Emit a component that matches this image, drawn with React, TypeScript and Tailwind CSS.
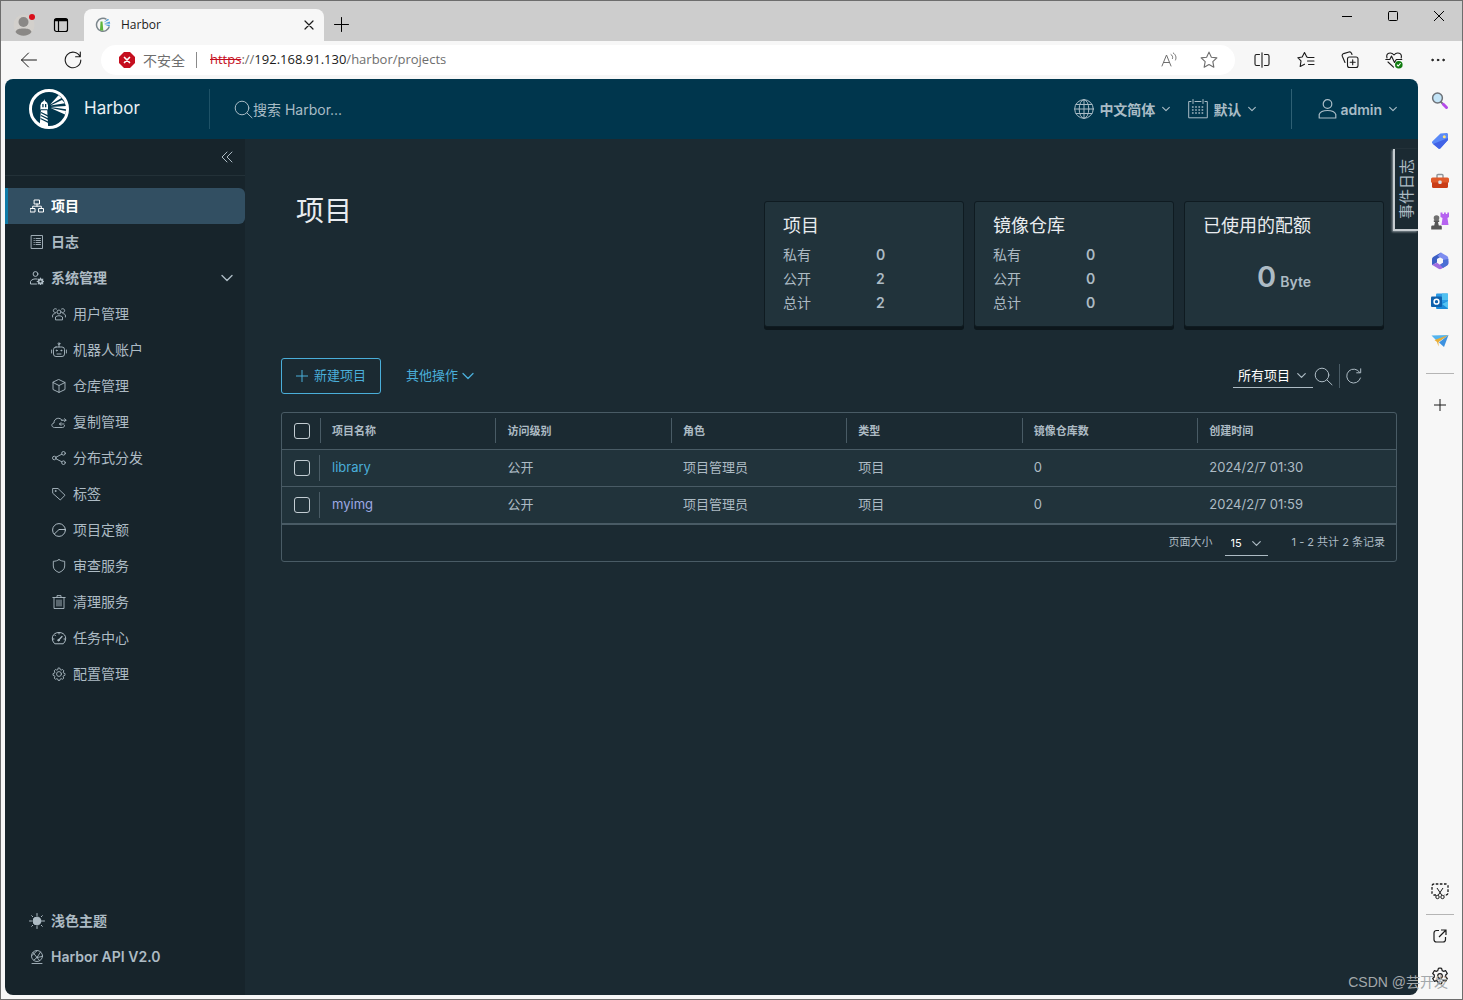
import React from "react";

type IconProps = { className?: string; children: React.ReactNode; box?: number; sw?: number };

function Icon({ className = "size-4", children, box = 16, sw = 1 }: IconProps) {
  return (
    <svg
      className={`shrink-0 ${className}`}
      viewBox={`0 0 ${box} ${box}`}
      fill="none"
      stroke="currentColor"
      strokeWidth={sw}
      strokeLinecap="round"
      strokeLinejoin="round"
      aria-hidden="true"
    >
      {children}
    </svg>
  );
}

const GEAR =
  "M8 1.2l1.1.2.4 1.7 1 .5 1.6-.8 1.5 1.6-.8 1.5.5 1.1 1.6.5v1.1l-.1.9-1.6.5-.5 1.1.8 1.5-1.5 1.5-1.5-.8-1.1.5-.5 1.6H7.1l-.5-1.6-1.1-.5-1.5.8-1.5-1.5.8-1.5-.5-1.1-1.6-.5v-2l1.6-.5.5-1.1-.8-1.5 1.5-1.6 1.5.8 1.1-.5.4-1.7z";

function Chevron({ className = "size-2", sw = 1 }: { className?: string; sw?: number }) {
  return (
    <Icon className={className} box={12} sw={sw}>
      <path d="M1 3.5l5 5 5-5" />
    </Icon>
  );
}

function SearchIcon() {
  return (
    <Icon className="size-[19px]" box={19}>
      <circle cx="8" cy="8" r="6.8" />
      <path d="M13 13l5 4.8" />
    </Icon>
  );
}

function HarborLogo() {
  return (
    <svg className="size-10 shrink-0" viewBox="0 0 40 40" aria-hidden="true">
      <circle cx="20" cy="20" r="18.5" fill="none" stroke="#fff" strokeWidth="3" />
      <path
        fill="#fff"
        d="M15.300 10l.5 1.800 2.600 2.200v1.500h.6v5h-.8l.8 15 .2 2.500-8.500-1.500 1.300-16h-.6v-5h.6V14l2.800-2.200z"
      />
      <path fill="#00364d" d="M13.300 15h1.300v3.300h-1.300zM16 15h1.300v3.300H16zM12 20.300h6.500v.9H12z" />
      <path stroke="#00364d" strokeWidth="1.200" d="M12 23.500l7.300 3.600M12 26.500l7.300 3.600M11.500 29.500l8 3.900" />
      <path
        fill="#fff"
        d="M21 15.700l8.500-9.500 3 2.800zM21.500 16.500l11.500-5.500 3 3.300zM21.500 18l15.500-1v3.200zM21.500 19l15.500 3-1 3.600z"
      />
    </svg>
  );
}

function Favicon() {
  return (
    <svg className="size-4 shrink-0" viewBox="0 0 16 16" aria-hidden="true">
      <path d="M11.500 2.300A6.500 6.500 0 1 0 14.300 9.500" fill="none" stroke="#7b868c" strokeWidth="1.500" />
      <path d="M5.500 4.500h2l.8 9.300-3.300-.6z" fill="#5eb53c" />
      <path d="M8.500 5.500l4.500-3.800 1 1.200zM9 6.500l5.800-2 .4 2.300zM9 7.500l6 .3-.5 1.800z" fill="#4a9bd4" />
    </svg>
  );
}

const icons = {
  projects: (
    <Icon className="size-[14px]" box={14}>
      <path d="M4.500 1h5v4h-5zM.5 9.500H5v3.500H.5zM9 9.500h4.500V13H9zM7 5v2.200M2.700 9.500V7.200h8.600v2.300" />
    </Icon>
  ),
  logs: (
    <Icon className="size-[14px]" box={14} sw={0.9}>
      <path d="M1.500.5h11v13h-11zM4 3.500h.3M4 5.500h.3M4 7.500h.3M4 9.500h.3M6 3.500h4.500M6 5.500h4.500M6 7.500h4.500M6 9.500h4.500" />
    </Icon>
  ),
  admin: (
    <Icon className="size-[14px]" box={14}>
      <circle cx="5.500" cy="3" r="2.400" />
      <path d="M6.500 13H.5v-2.500C1.500 8.500 4 7.500 7 8" />
      <circle cx="10.500" cy="10.500" r="2" strokeWidth="1.800" />
      <path d="M10.500 7.200v1M10.500 12.800v1M7.200 10.500h1M12.800 10.500h1M8.200 8.200l.7.7M12.100 12.100l.7.7M12.800 8.200l-.7.7M8.900 12.100l-.7.7" strokeWidth="1.200" />
    </Icon>
  ),
  users: (
    <Icon className="size-[14px]" box={14} sw={0.9}>
      <circle cx="7" cy="5" r="2" />
      <path d="M3.500 12.500V10C5 8.300 9 8.300 10.500 10v2.500zM4 5.500A2 2 0 1 1 4.500 2M10 5.500A2 2 0 1 0 9.500 2M.6 10V8c.5-.9 1.300-1.300 2.500-1.400M13.400 10V8c-.5-.9-1.300-1.300-2.500-1.400" />
    </Icon>
  ),
  robot: (
    <Icon className="size-4" box={16} sw={0.9}>
      <rect x="2.500" y="5" width="11" height="9.500" rx="2.500" />
      <path d="M8 5V2.500M.6 8v3M15.400 8v3M6 12h4" />
      <circle cx="8" cy="1.700" r=".9" />
      <circle cx="5.700" cy="8.500" r=".5" />
      <circle cx="10.300" cy="8.500" r=".5" />
    </Icon>
  ),
  box: (
    <Icon className="size-[14px]" box={14} sw={0.9}>
      <path d="M7 .6l6 2.900v7L7 13.400 1 10.500v-7zM1 3.500l6 3 6-3M7 6.500v6.900" />
    </Icon>
  ),
  cloud: (
    <Icon className="size-4" box={16} sw={0.9}>
      <path d="M13.500 11.500c0 1.200-.8 2-2 2H3.500C.2 13.300-.1 9.500 3 9c-.3-5 6.300-6.500 8.200-2.500M10.500 6.200h4.500M13.500 4.700L15 6.200l-1.500 1.500M13 10H8.500M10 8.500L8.500 10l1.500 1.500" />
    </Icon>
  ),
  share: (
    <Icon className="size-[14px]" box={14} sw={0.9}>
      <circle cx="2.300" cy="7" r="1.800" />
      <circle cx="11.500" cy="2.300" r="1.800" />
      <circle cx="11.500" cy="11.700" r="1.800" />
      <path d="M4 6.200l5.800-3M4 7.800l5.800 3" />
    </Icon>
  ),
  tag: (
    <Icon className="size-[14px]" box={14} sw={0.9}>
      <path d="M1 1.500h5l7 6.700-4.700 4.800L1 6.500z" />
      <circle cx="3.500" cy="4" r=".5" />
    </Icon>
  ),
  quota: (
    <Icon className="size-[14px]" box={14}>
      <circle cx="7" cy="7" r="6.400" />
      <path d="M13.300 6.500H7L2.300 11" />
    </Icon>
  ),
  shield: (
    <Icon className="size-[14px]" box={14} sw={0.9}>
      <path d="M7 .6c1.500 1 3.500 1.700 5.700 1.700V7c0 3.500-3 5.500-5.700 6.500C4.300 12.500 1.300 10.500 1.300 7V2.300C3.500 2.300 5.500 1.600 7 .6z" />
    </Icon>
  ),
  trash: (
    <Icon className="size-[14px]" box={14} sw={0.9}>
      <path d="M.8 2.500h12.400M5 2.300V.6h4v1.700M2 2.500v11h10v-11M5 5v6M7 5v6M9 5v6" />
    </Icon>
  ),
  gauge: (
    <Icon className="size-4" box={16}>
      <path d="M3.500 13.500C-1 9 1.500 2.500 8 2.500s9 6.500 4.500 11zM8 2.500v1.500M1.500 9h1.500M13 9h1.500M3.700 5l.8.8" />
      <path d="M7.500 10.200L11 6.500" strokeWidth="1.300" />
      <circle cx="7.500" cy="10.200" r=".8" fill="currentColor" />
    </Icon>
  ),
  gear: (
    <Icon className="size-[14px]" box={16}>
      <path d={GEAR} />
      <circle cx="8" cy="8" r="2.800" />
    </Icon>
  ),
  sun: (
    <Icon className="size-4" box={16}>
      <circle cx="8" cy="8" r="4" fill="currentColor" />
      <path d="M8 .5v2M8 13.500v2M.5 8h2M13.500 8h2M2.700 2.700l1 1M12.300 12.300l1 1M13.300 2.700l-1 1M2.700 13.300l1-1" />
    </Icon>
  ),
  api: (
    <Icon className="size-[14px]" box={14} sw={0.9}>
      <circle cx="7" cy="6" r="5.500" />
      <path d="M2 13.500h10M3 2.500l4 5 5-1M7 7.500L4 10M7 7.500L10.500 2M2 5.500L7 .8M9.500 10.500L7 7.500" />
    </Icon>
  ),
};

const subItems: [keyof typeof icons, string][] = [
  ["users", "用户管理"],
  ["robot", "机器人账户"],
  ["box", "仓库管理"],
  ["cloud", "复制管理"],
  ["share", "分布式分发"],
  ["tag", "标签"],
  ["quota", "项目定额"],
  ["shield", "审查服务"],
  ["trash", "清理服务"],
  ["gauge", "任务中心"],
  ["gear", "配置管理"],
];

function NavIcon({ name }: { name: keyof typeof icons }) {
  return <span className="flex w-4 shrink-0 justify-center">{icons[name]}</span>;
}

function TitleBar() {
  return (
    <div className="flex h-10 bg-[#cdcdcd]">
      <div className="flex w-[83px] items-center gap-4 pt-2 pl-2.5">
        <button aria-label="Profile" className="relative size-[26px]">
          <svg viewBox="0 0 26 26" className="size-[26px]" aria-hidden="true">
            <circle cx="13" cy="13" r="10.500" fill="#d3d0cc" />
            <circle cx="12.500" cy="10" r="5" fill="#8a8886" />
            <path d="M4.500 20c1-3 3.500-3.500 8-3.500s7 .5 8 3.500c-3.500 5-12.500 5-16 0z" fill="#8a8886" />
            <circle cx="21" cy="5" r="3" fill="#d90f1c" />
          </svg>
        </button>
        <button aria-label="Tab actions">
          <Icon className="size-4" sw={1.2}>
            <rect x="1.500" y="1.500" width="13" height="13" rx="2" />
            <path d="M2.500 3h11" strokeWidth="2.600" />
            <path d="M5.500 4v10" />
          </Icon>
        </button>
      </div>
      <div className="mt-2 flex w-60 items-center rounded-t-lg bg-[#f7f7f7] pr-2 pl-[11px] text-[12px] text-[#1b1b1b]">
        <Favicon />
        <span className="ml-2.5 flex-1">Harbor</span>
        <button aria-label="Close tab" className="p-[2px]">
          <Icon className="size-2.5" box={10} sw={1.2}>
            <path d="M1 1l8 8M9 1l-8 8" />
          </Icon>
        </button>
      </div>
      <button aria-label="New tab" className="ml-2.5 pt-[7px]">
        <Icon className="size-[15px]" box={15}>
          <path d="M7.500.5v14M.5 7.500h14" />
        </Icon>
      </button>
      <div className="ml-auto flex h-[30px]">
        <button aria-label="Minimize" className="flex w-[46px] items-center justify-center">
          <Icon className="size-2.5" box={10}><path d="M0 5.500h10" /></Icon>
        </button>
        <button aria-label="Maximize" className="flex w-[46px] items-center justify-center">
          <Icon className="size-2.5" box={10}><rect x=".5" y=".5" width="9" height="9" rx="1" /></Icon>
        </button>
        <button aria-label="Close" className="flex w-[46px] items-center justify-center">
          <Icon className="size-2.5" box={10}><path d="M.3.3l9.400 9.400M9.700.3L.3 9.700" /></Icon>
        </button>
      </div>
    </div>
  );
}

const STAR = "M8 1l2.100 4.500 4.900.6-3.600 3.400.9 4.900L8 12l-4.300 2.400.9-4.900L1 6.100l4.900-.6z";

function ToolButton({ label, children }: { label: string; children: React.ReactNode }) {
  return (
    <button aria-label={label} className="flex w-11 shrink-0 items-center justify-center">
      {children}
    </button>
  );
}

function Toolbar() {
  return (
    <div className="flex h-[38px] bg-[#f7f7f7] pl-1.5 text-[#1b1b1b]">
      <ToolButton label="Back">
        <Icon className="size-4"><path d="M.5 8h15M7.500 1L.5 8l7 7" /></Icon>
      </ToolButton>
      <ToolButton label="Refresh">
        <Icon className="size-[18px]" box={18} sw={1.100}>
          <path d="M16 5.500A7.800 7.800 0 1 0 16.800 9M16.300 1v4.700h-4.700" />
        </Icon>
      </ToolButton>
      <div className="my-1 mr-[5px] ml-1.5 flex flex-1 items-center rounded-full bg-white pl-[18px] text-[14px] text-[#6e6e6e]">
        <svg viewBox="0 0 16 16" className="size-4 shrink-0" aria-hidden="true">
          <path d="M5 0h6l5 5v6l-5 5H5l-5-5V5z" fill="#c50f1f" />
          <path d="M5.500 5.500l5 5M10.500 5.500l-5 5" stroke="#fff" strokeWidth="1.700" strokeLinecap="round" />
        </svg>
        <span className="ml-2">不安全</span>
        <span className="mr-[13px] ml-[11px] h-4 w-px bg-[#8a8a8a]" />
        <div className="flex-1 text-[13px]">
          <span className="text-[#c50f1f] line-through">https</span>://
          <span className="text-[#1b1b1b]">192.168.91.130</span>/harbor/projects
        </div>
        <button aria-label="Read aloud" className="flex w-10 justify-center">
          <Icon className="size-4">
            <path d="M1 14L5.500 3 10 14M2.600 10.500h5.800M10 2.500c1.500.9 2 2.500 1.500 4M12.300 1c2.600 1.800 3.300 4.500 2.200 7" />
          </Icon>
        </button>
        <button aria-label="Favorite" className="mr-[6px] flex w-10 justify-center">
          <Icon className="size-[18px]"><path d={STAR} /></Icon>
        </button>
      </div>
      <ToolButton label="Split screen">
        <Icon className="size-4" sw={1.100}>
          <path d="M5.500 2.500h-3a1.500 1.500 0 0 0-1.500 1.500v8a1.500 1.500 0 0 0 1.500 1.500h3M10.500 2.500h3A1.500 1.500 0 0 1 15 4v8a1.500 1.500 0 0 1-1.500 1.500h-3M8 .7v14.600" />
        </Icon>
      </ToolButton>
      <ToolButton label="Favorites">
        <Icon className="size-[18px]" box={18} sw={1.100}>
          <path d="M11 6.500L9.800 6 7.500 1.500 5.200 6 .8 6.700l3.200 3.200-.8 5.600 4.300-2.300M11 6.500h6M10.500 10H17M11.500 13.500H17" />
        </Icon>
      </ToolButton>
      <ToolButton label="Collections">
        <Icon className="size-[18px]" box={18} sw={1.100}>
          <rect x="6.500" y="6" width="10.500" height="10.500" rx="2" />
          <path d="M11.700 8.700v5M9.200 11.200h5M4 11.500L1.300 5.200C.9 4 1.500 3 2.600 2.600L8 1c1.200-.3 2 .2 2.500 1.200L11 3.500" />
        </Icon>
      </ToolButton>
      <ToolButton label="Browser essentials">
        <Icon className="size-[18px]" box={18} sw={1.100}>
          <path d="M2 7C.5 2 6 .5 9 4c3-3.500 8.500-2 7.200 3M.8 8.500h4L6.500 5l3 6.500 1.800-3h5.500M3 11l5.500 5.200" />
          <circle cx="13.800" cy="13.800" r="3.800" fill="#107c10" stroke="none" />
          <path d="M12.300 14l1 1 2-2.500" stroke="#fff" />
        </Icon>
      </ToolButton>
      <ToolButton label="More">
        <Icon className="size-4">
          <circle cx="2.500" cy="8" r=".8" fill="currentColor" />
          <circle cx="8" cy="8" r=".8" fill="currentColor" />
          <circle cx="13.500" cy="8" r=".8" fill="currentColor" />
        </Icon>
      </ToolButton>
      <span className="w-0.5" />
    </div>
  );
}

function AppHeader() {
  return (
    <header className="flex h-[60px] items-center bg-[#00364d] pr-[21px] pl-6 text-[#a9bcc6]">
      <a href="#home" className="flex w-[180px] items-center gap-[15px] text-[17px] text-[#e9f0f3]">
        <HarborLogo />
        Harbor
      </a>
      <span className="h-10 w-px bg-[#1e5267]" />
      <label className="ml-6 flex flex-1 items-center">
        <SearchIcon />
        <input
          type="search"
          aria-label="搜索"
          placeholder="搜索 Harbor..."
          className="w-full bg-transparent text-[14px] outline-none placeholder:text-[#a9bcc6]"
        />
      </label>
      <button className="flex items-center text-[14px] font-semibold">
        <Icon className="mr-[5px] size-5" box={20}>
          <circle cx="10" cy="10" r="9.300" />
          <ellipse cx="10" cy="10" rx="4.800" ry="9.300" />
          <path d="M10 .7v18.600M.7 10h18.600M2 5.500h16M2 14.500h16" />
        </Icon>
        中文简体
        <Chevron className="ml-[7px] size-2" sw={1.7} />
      </button>
      <button className="ml-[18px] flex items-center text-[14px] font-semibold">
        <Icon className="mr-[5px] size-5" box={20}>
          <path d="M3 2.500H.7v16.300h18.600V2.500H17M7 2.500h6M5 .5v4M15 .5v4" />
          <path d="M4.500 8h12M4.500 11h12M4.500 14h12" strokeDasharray=".6 2.600" strokeWidth="1.400" />
        </Icon>
        默认
        <Chevron className="ml-[7px] size-2" sw={1.7} />
      </button>
      <span className="mr-[26px] ml-[35px] h-10 w-px bg-[#2e6074]" />
      <button className="flex items-center text-[14px] font-semibold">
        <Icon className="mr-0.5 size-5" box={20} sw={1.200}>
          <circle cx="9.500" cy="5" r="4.300" />
          <path d="M1.200 19v-3.500c1-3 4-4 8.300-4s7.300 1 8.300 4V19z" />
        </Icon>
        admin
        <Chevron className="ml-[7px] size-2" sw={1.7} />
      </button>
    </header>
  );
}

function SideNav() {
  return (
    <nav className="flex w-60 shrink-0 flex-col bg-[#17242b] text-[14px] text-[#adbbc4]">
      <div className="flex h-[37px] items-center justify-end border-b border-[#233138] pr-3">
        <button aria-label="收起">
          <Icon className="size-3" box={12}><path d="M6 1L1 6l5 5M11 1L6 6l5 5" /></Icon>
        </button>
      </div>
      <div className="mt-3 flex flex-col">
        <a href="#projects" className="flex h-9 items-center gap-[6px] rounded-r-md border-l-3 border-[#0f7aa6] bg-[#324f62] pb-px pl-[21px] font-semibold text-white">
          <NavIcon name="projects" />
          项目
        </a>
        <a href="#logs" className="flex h-9 items-center gap-[6px] pb-px pl-6 font-semibold">
          <NavIcon name="logs" />
          日志
        </a>
        <button className="flex h-9 items-center gap-[6px] pr-3 pb-px pl-6 text-left font-semibold">
          <NavIcon name="admin" />
          <span className="flex-1">系统管理</span>
          <Chevron className="size-3" sw={1.4} />
        </button>
        {subItems.map(([icon, label]) => (
          <a key={label} href={`#${icon}`} className="flex h-9 items-center gap-[6px] pb-px pl-[46px]">
            <NavIcon name={icon} />
            {label}
          </a>
        ))}
      </div>
      <div className="mt-auto flex flex-col pb-5 font-semibold">
        <button className="flex h-9 items-center gap-[6px] pb-px pl-6">
          <NavIcon name="sun" />
          浅色主题
        </button>
        <a href="#api" className="flex h-9 items-center gap-[6px] pb-px pl-6">
          <NavIcon name="api" />
          Harbor API V2.0
        </a>
      </div>
    </nav>
  );
}

const CARD = "h-[126px] w-[200px] rounded-[3px] border border-[#0f1b21] bg-[#21333b] px-[18px] pt-3 shadow-[0_3px_0_0_#0c161b]";

function StatCard({ title, values }: { title: string; values: number[] }) {
  return (
    <section className={CARD}>
      <h2 className="text-[18px] leading-6 text-[#e9ecef]">{title}</h2>
      <dl className="mt-[5px] text-[14px] leading-6">
        {["私有", "公开", "总计"].map((label, i) => (
          <div key={label} className="flex">
            <dt className="w-[93px]">{label}</dt>
            <dd className="font-semibold">{values[i]}</dd>
          </div>
        ))}
      </dl>
    </section>
  );
}

const columns = ["项目名称", "访问级别", "角色", "类型", "镜像仓库数", "创建时间"];
const rows = [
  { name: "library", created: "2024/2/7 01:30", visited: false },
  { name: "myimg", created: "2024/2/7 01:59", visited: true },
];

function Check({ label }: { label: string }) {
  return (
    <input
      type="checkbox"
      aria-label={label}
      className="mt-px ml-3 block size-4 appearance-none rounded-[3px] border border-[#c3cdd3] checked:bg-[#4aaed9]"
    />
  );
}

function ProjectTable() {
  return (
    <div className="mt-[18px] overflow-hidden rounded-[3px] border border-[#495b65]">
      <table className="w-full table-fixed text-left text-[13px]">
        <colgroup>
          <col className="w-[38px]" />
          <col className="w-[15.75%]" />
          <col className="w-[15.75%]" />
          <col className="w-[15.75%]" />
          <col className="w-[15.75%]" />
          <col className="w-[15.75%]" />
          <col />
        </colgroup>
        <thead className="text-[11px]">
          <tr className="h-9 border-b border-[#495b65]">
            <th><Check label="全选" /></th>
            {columns.map((c) => (
              <th key={c} className="font-semibold">
                <div className="flex h-[25px] items-center border-l border-[#495b65] pl-[11px]">{c}</div>
              </th>
            ))}
          </tr>
        </thead>
        <tbody className="bg-[#21333b]">
          {rows.map((r) => (
            <tr key={r.name} className="h-[37px] border-b border-[#495b65]">
              <td>
                <div className="flex h-[26px] items-center border-r border-[#495b65]">
                  <Check label={r.name} />
                </div>
              </td>
              <td className="pl-3">
                <a href={`#${r.name}`} className={r.visited ? "text-[#9da9e3]" : "text-[#4aaed9]"}>{r.name}</a>
              </td>
              <td className="pl-3">公开</td>
              <td className="pl-3">项目管理员</td>
              <td className="pl-3">项目</td>
              <td className="pl-3">0</td>
              <td className="pl-3">{r.created}</td>
            </tr>
          ))}
        </tbody>
      </table>
      <div className="flex h-[37px] items-center justify-end border-t border-[#495b65] pr-[11px] text-[11px]">
        <label htmlFor="page-size">页面大小</label>
        <div className="mt-0.5 mr-6 ml-3 flex h-6 w-[43px] items-center border-b border-[#adbbc4]">
          <select id="page-size" className="w-full appearance-none bg-transparent pl-1.5 text-white outline-none">
            <option>15</option>
          </select>
          <Chevron className="pointer-events-none -ml-4 size-[9px]" sw={1.600} />
          <span className="w-[7px] shrink-0" />
        </div>
        <span>1 - 2 共计 2 条记录</span>
      </div>
    </div>
  );
}

function Content() {
  return (
    <main className="relative min-w-0 flex-1 bg-[#1b2a32] pr-[21px] pl-9 text-[#adbbc4]">
      <div className="flex items-start justify-between pt-[62px] pr-[13px] pl-[15px]">
        <h1 className="-mt-2.5 text-[28px] leading-10 text-[#e9ecef]">项目</h1>
        <div className="flex gap-2.5">
          <StatCard title="项目" values={[0, 2, 2]} />
          <StatCard title="镜像仓库" values={[0, 0, 0]} />
          <section className={CARD}>
            <h2 className="text-[18px] leading-6 text-[#e9ecef]">已使用的配额</h2>
            <p className="mt-[19px] text-center leading-10 font-semibold">
              <span className="text-[29px]">0</span> <span className="text-[14px]">Byte</span>
            </p>
          </section>
        </div>
      </div>
      <div className="mt-[31px] flex h-9 items-center text-[13px] text-[#4aaed9]">
        <button className="flex h-9 items-center gap-1.5 rounded-[3px] border border-[#4aaed9] px-3.5">
          <Icon className="size-3" box={12}><path d="M6 0v12M0 6h12" /></Icon>
          新建项目
        </button>
        <button className="ml-[25px] flex items-center gap-1">
          其他操作
          <Chevron className="size-3" sw={1.300} />
        </button>
        <div className="mr-[35px] ml-auto flex items-center text-[#adbbc4]">
          <div className="flex h-6 w-20 items-center border-b border-[#adbbc4]">
            <select aria-label="项目范围" className="w-full appearance-none bg-transparent pl-[5px] text-white outline-none">
              <option>所有项目</option>
            </select>
            <Chevron className="pointer-events-none -ml-4 size-[9px]" sw={1.600} />
            <span className="w-[7px] shrink-0" />
          </div>
          <button aria-label="搜索项目" className="ml-px"><SearchIcon /></button>
          <span className="mx-[6px] h-6 w-px bg-[#495b65]" />
          <button aria-label="刷新">
            <Icon className="size-4"><path d="M14.500 10A7 7 0 1 1 13.800 4.500M14.700.8v4h-4" /></Icon>
          </button>
        </div>
      </div>
      <ProjectTable />
      <button className="absolute top-2.5 right-0 flex h-[82px] w-[25px] items-center justify-center border-b-2 border-l-2 border-[#c6ccd0] bg-[#1b2a32] text-[15px] shadow-[-1px_1px_2px_#8a949a]">
        <span className="rotate-180 leading-5 [text-orientation:sideways] [writing-mode:vertical-rl]">事件日志</span>
      </button>
    </main>
  );
}

function EdgeIcon({ label, children }: { label: string; children: React.ReactNode }) {
  return (
    <button aria-label={label} className="flex h-10 items-center justify-center">
      <svg viewBox="0 0 18 18" className="size-[18px]" fill="none" aria-hidden="true">{children}</svg>
    </button>
  );
}

function EdgeSidebar() {
  return (
    <aside className="flex w-11 shrink-0 flex-col bg-[#f7f7f7] pt-0.5 text-[#1b1b1b]">
      <EdgeIcon label="Search">
        <path d="M9.500 9.500l3 3" stroke="#6d7278" strokeWidth="1.800" />
        <path d="M12.300 12.300l3.200 3.200" stroke="#b44be8" strokeWidth="3" strokeLinecap="round" />
        <circle cx="6.500" cy="6" r="4.900" fill="#c3e4f7" stroke="#6d7278" strokeWidth="1.500" />
      </EdgeIcon>
      <EdgeIcon label="Shopping">
        <path d="M9.500 1.500L15.500 1c.9 0 1.500.5 1.500 1.500V8l-7.500 8.300c-.8.700-1.600.7-2.300 0L1.500 11.500c-.7-.8-.7-1.500 0-2.300z" fill="#5a8af8" />
        <path d="M2 11.900L17 6v2l-7.500 8.300c-.8.700-1.600.7-2.300 0z" fill="#4263e6" />
        <circle cx="13.300" cy="4.700" r="1.500" fill="#ffe27a" />
      </EdgeIcon>
      <EdgeIcon label="Tools">
        <path d="M6 6V3.500c0-.6.400-1 1-1h4c.6 0 1 .4 1 1V6" stroke="#8f9499" strokeWidth="1.400" />
        <path d="M1 10h16v4.500a1.500 1.500 0 0 1-1.500 1.500h-13A1.500 1.500 0 0 1 1 14.500z" fill="#c93d17" />
        <path d="M0 7a1.500 1.500 0 0 1 1.500-1.500h15A1.500 1.500 0 0 1 18 7v3.500H0z" fill="#e05a2b" />
        <rect x="7.300" y="8.500" width="3.400" height="3.500" rx="1.200" fill="#dfe2e5" />
      </EdgeIcon>
      <EdgeIcon label="Games">
        <path d="M9.500.5h2V2H13V.5h1.800V2h1.500V.5h1.700v4.500l-1.500 1 1 7H10.500l1-7-2-1z" fill="#b663f0" />
        <circle cx="5.500" cy="6" r="2.800" fill="#707070" />
        <path d="M2.800 8.300h5.400V10H7l.8 3.500H10c.6.3.8.8.8 1.500v2.500H.2V15c0-.7.2-1.200.8-1.500h2.200L4 10H2.800z" fill="#555" />
      </EdgeIcon>
      <EdgeIcon label="Microsoft 365">
        <path d="M10 .5L3.300 4.200C1.500 5.200 1 6 1 7.500v5.800l5-2.800V7l5-3z" fill="#3c5fc4" />
        <path d="M10 .5l6 3.600c1 .7 1.300 1.500 1.300 2.700v5L12 9V7L6.500 4z" fill="#7d8df0" />
        <path d="M1 12.800l6.500 4c1 .5 2 .5 3 0l5.500-3.300c1-.6 1.300-1.500 1.300-2.500V9L12 8v2.800l-3 2-3-2z" fill="#a06ce0" />
        <path d="M17.300 7v4c0 1-.3 1.900-1.300 2.500l-4 2.400-3-3.100 3-2V8z" fill="#4a6fd4" />
      </EdgeIcon>
      <EdgeIcon label="Outlook">
        <rect x="5" y="1.500" width="12" height="15.500" rx="1" fill="#2b9be6" />
        <path d="M11 1.500h6V8h-6z" fill="#50c0f0" />
        <path d="M5 12.500L17 9v7a1 1 0 0 1-1 1H6z" fill="#1b8ad8" />
        <path d="M11 12l6 4.500V9z" fill="#55c3f3" />
        <rect y="4.500" width="11" height="10.500" rx="1" fill="#0f61ad" />
        <circle cx="5.500" cy="9.700" r="2.400" stroke="#fff" strokeWidth="1.500" />
      </EdgeIcon>
      <EdgeIcon label="Drop">
        <path d="M.5 3.500L17.500 3 7 10z" fill="#53b4ef" />
        <path d="M3.500 8L17.500 3 7.500 10v4.500L6 10z" fill="#e9ad35" />
        <path d="M8 10.500L17.500 3 13 15z" fill="#3d92e0" />
      </EdgeIcon>
      <span className="mx-2 mt-3 mb-[11px] h-px bg-[#b5b5b5]" />
      <EdgeIcon label="Customize">
        <path d="M9 3v12M3 9h12" stroke="currentColor" />
      </EdgeIcon>
      <div className="mt-auto flex flex-col pb-[3px]">
        <EdgeIcon label="Screenshot">
          <path d="M5 13H3a2 2 0 0 1-2-2V4a2 2 0 0 1 2-2h12a2 2 0 0 1 2 2v7a2 2 0 0 1-2 2h-2" stroke="currentColor" strokeWidth="1.300" strokeDasharray="2.600 1.500" />
          <path d="M6 6l5 7.500M12 6l-5 7.500" stroke="currentColor" />
          <circle cx="6.500" cy="15" r="1.700" stroke="currentColor" />
          <circle cx="11.500" cy="15" r="1.700" stroke="currentColor" />
        </EdgeIcon>
        <span className="mx-2 mt-[3px] mb-px h-px bg-[#b5b5b5]" />
        <EdgeIcon label="Open link">
          <path d="M8 3.500H5.500a2.500 2.500 0 0 0-2.500 2.500v6.500A2.500 2.500 0 0 0 5.500 15H12a2.500 2.500 0 0 0 2.500-2.500V10M10 3h5v5M15 3L8 10" stroke="currentColor" strokeWidth="1.200" />
        </EdgeIcon>
        <EdgeIcon label="Settings">
          <path d="M9 1l1.600.3.6 2.300 1.300.7 2.200-.6 1.600 2.800L14.700 8v2l1.600 1.500-1.600 2.800-2.200-.6-1.300.7-.6 2.300H7.400l-.6-2.300-1.300-.7-2.200.6-1.600-2.800L3.300 10V8L1.700 6.500l1.600-2.800 2.200.6 1.300-.7.600-2.300z" stroke="currentColor" strokeWidth="1.200" strokeLinejoin="round" />
          <circle cx="9" cy="9" r="2.300" stroke="currentColor" strokeWidth="1.200" />
        </EdgeIcon>
      </div>
    </aside>
  );
}

export default function App() {
  return (
    <div className="relative flex min-h-screen flex-col border border-[#6d6d6d] bg-[#f7f7f7] font-['Open_Sans','Noto_Sans_CJK_SC',sans-serif]">
      <TitleBar />
      <Toolbar />
      <div className="flex flex-1">
        <div className="mb-1 ml-1 flex min-w-0 flex-1 flex-col overflow-hidden rounded-lg font-[Inter,'Noto_Sans_CJK_SC',sans-serif]">
          <AppHeader />
          <div className="flex flex-1">
            <SideNav />
            <Content />
          </div>
        </div>
        <EdgeSidebar />
      </div>
      <span className="pointer-events-none absolute right-3.5 bottom-1.5 font-['Liberation_Sans','Noto_Sans_CJK_SC',sans-serif] text-[14px] text-[#a3a8ab]">
        CSDN @芸开发
      </span>
    </div>
  );
}
